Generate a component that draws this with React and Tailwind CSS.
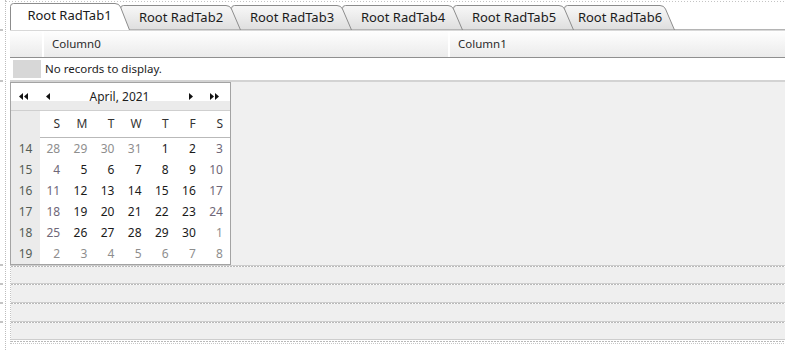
import clsx from 'clsx';

const TABS = [
  { label: 'Root RadTab1', w: 120, box: 'w-[120px] h-[27px] -mb-px z-[6]', selected: true },
  { label: 'Root RadTab2', w: 121, box: 'w-[121px] h-[25px] -mb-px -ml-[10px] z-[5]' },
  { label: 'Root RadTab3', w: 121, box: 'w-[121px] h-[25px] -mb-px -ml-[10px] z-[4]' },
  { label: 'Root RadTab4', w: 121, box: 'w-[121px] h-[25px] -mb-px -ml-[10px] z-[3]' },
  { label: 'Root RadTab5', w: 121, box: 'w-[121px] h-[25px] -mb-px -ml-[10px] z-[2]' },
  { label: 'Root RadTab6', w: 111, box: 'w-[111px] h-[25px] -mb-px -ml-[10px] z-[1]' },
];

// week number, then 7 days; o = other month, w = weekend
const WEEKS = [
  [14, ['28o', '29o', '30o', '31o', '1', '2', '3w']],
  [15, ['4w', '5', '6', '7', '8', '9', '10w']],
  [16, ['11w', '12', '13', '14', '15', '16', '17w']],
  [17, ['18w', '19', '20', '21', '22', '23', '24w']],
  [18, ['25w', '26', '27', '28', '29', '30', '1o']],
  [19, ['2o', '3o', '4o', '5o', '6o', '7o', '8o']],
];

function Tab({ tab, i }) {
  const h = tab.selected ? 27 : 25;
  const w = tab.w;
  const outline = `M0.5 ${h} V3.5 Q0.5 0.5 3.5 0.5 H${w - 15} Q${w - 11} 0.5 ${w - 9.5} 4 L${w - 0.5} ${h}`;
  return (
    <div className={clsx('relative flex shrink-0 items-center justify-center', tab.box)}>
      <svg className="absolute inset-0" width={w} height={h}>
        <defs>
          <linearGradient id={`tabg${i}`} x1="0" y1="0" x2="0" y2="1">
            <stop offset="0" stopColor="#f8f8f8" />
            <stop offset="1" stopColor="#dedede" />
          </linearGradient>
        </defs>
        <path d={`${outline} Z`} fill={tab.selected ? '#ffffff' : `url(#tabg${i})`} />
        <path d={tab.selected ? outline : `${outline} Z`} fill="none" stroke="#8c8c8c" />
      </svg>
      <span className={clsx('relative text-[13px] text-[#1b1b1b]', tab.selected ? 'pb-[1px] pr-[1px]' : 'pt-[1px] pl-[1px]')}>
        {tab.label}
      </span>
    </div>
  );
}

function Tri({ dir, double }) {
  const one = dir === 'l' ? '4,0 4,7 0,3.5' : '0,0 0,7 4,3.5';
  const two = dir === 'l' ? '9,0 9,7 5,3.5' : '5,0 5,7 9,3.5';
  return (
    <svg width={double ? 9 : 4} height="7" className="shrink-0">
      <polygon points={one} fill="#111" />
      {double && <polygon points={two} fill="#111" />}
    </svg>
  );
}

function Calendar() {
  return (
    <div className="flex w-[221px] shrink-0 flex-col border border-[#a3a3a3] bg-white">
      <div className="flex h-[27px] items-center bg-[linear-gradient(to_bottom,#ffffff_0_18px,#ebebeb_18px)] pl-[8px] pr-[11px]">
        <Tri dir="l" double />
        <span className="ml-[18px] flex"><Tri dir="l" /></span>
        <span className="flex-1 text-center text-[12px] text-[#1e1e1e]">April, 2021</span>
        <Tri dir="r" />
        <span className="ml-[17px] flex"><Tri dir="r" double /></span>
      </div>
      <div className="h-px bg-[#cfcfcf]" />
      <div className="flex">
        <div className="flex w-[29px] flex-col bg-[#ebebeb]">
          <div className="h-[27px]" />
          {WEEKS.map(([n]) => (
            <div key={n} className="flex h-[21px] items-center justify-center text-[12px] text-[#555d55]">
              {n}
            </div>
          ))}
        </div>
        <div className="flex flex-1 flex-col">
          <div className="grid h-[27px] grid-cols-7 border-b border-[#b9b9b9]">
            {['S', 'M', 'T', 'W', 'T', 'F', 'S'].map((d, k) => (
              <div key={k} className="flex items-center justify-end pr-[7px] text-[12px] text-[#333]">
                {d}
              </div>
            ))}
          </div>
          {WEEKS.map(([n, days]) => (
            <div key={n} className="grid h-[21px] grid-cols-7">
              {days.map((d, k) => {
                const other = d.endsWith('o');
                const weekend = d.endsWith('w');
                return (
                  <div
                    key={k}
                    className={clsx(
                      'flex items-center justify-end pr-[7px] text-[12px]',
                      other ? 'text-[#8e8e8e]' : weekend ? 'text-[#6f6778]' : 'text-[#1a1a1a]'
                    )}
                  >
                    {d.replace(/[ow]$/, '')}
                  </div>
                );
              })}
            </div>
          ))}
        </div>
      </div>
    </div>
  );
}

function Panel({ h }) {
  return (
    <div className="flex flex-col">
      <div className="h-px bg-[#cdcdcd]" />
      <div className="h-px bg-[repeating-linear-gradient(90deg,#b9b9b9_0_2px,transparent_2px_3px)]" />
      <div className={clsx('bg-[#efefef]', h)} />
    </div>
  );
}

export default function App() {
  return (
    <div className="flex h-[350px] w-[785px] overflow-hidden bg-white font-['Noto_Sans','Open_Sans',sans-serif]">
      {/* bits of the parent designer surface */}
      <div className="flex w-[5px] flex-col">
        <div className="mt-[29px] h-[2px] w-[3px] bg-[#c4c4c4]" />
        <div className="mt-[49px] h-[2px] w-[3px] bg-[#c4c4c4]" />
        <div className="mt-[182px] h-[2px] w-[3px] bg-[#c4c4c4]" />
        <div className="mt-[17px] h-[2px] w-[3px] bg-[#c4c4c4]" />
        <div className="mt-[17px] h-[2px] w-[3px] bg-[#c4c4c4]" />
        <div className="mt-[17px] h-[2px] w-[3px] bg-[#c4c4c4]" />
      </div>

      <div className="flex flex-1 flex-col border-l border-dotted border-[#bdbdbd]">
        <div className="mt-px h-px bg-[repeating-linear-gradient(90deg,#c4c4c4_0_1px,transparent_1px_3px)]" />

        <div className="flex flex-1 flex-col pl-[4px] pt-px">
          {/* Tabs */}
          <div className="flex h-[27px] items-end border-b border-[#b4b4b4]">
            {TABS.map((t, i) => (
              <Tab key={t.label} tab={t} i={i} />
            ))}
          </div>

          {/* Grid */}
          <div className="flex h-[28px] gap-[2px] border-t border-[#d8d8d8] border-b border-b-[#8f8f8f] bg-white">
            <div className="w-[32px] bg-[linear-gradient(to_bottom,#fefefe,#ebebeb)]" />
            <div className="flex w-[404px] items-center bg-[linear-gradient(to_bottom,#fefefe,#ebebeb)] pl-[8px] text-[11.5px] text-[#2b2b2b]">
              Column0
            </div>
            <div className="flex flex-1 items-center bg-[linear-gradient(to_bottom,#fefefe,#ebebeb)] pl-[8px] text-[11.5px] text-[#2b2b2b]">
              Column1
            </div>
          </div>
          <div className="flex h-[24px] items-center border-b-2 border-[#d3d3d3]">
            <div className="ml-[3px] h-[18px] w-[28px] bg-[#d7d7d7]" />
            <span className="ml-[4px] text-[11.5px] text-[#222]">No records to display.</span>
          </div>

          {/* Calendar area */}
          <div className="flex bg-[#f0f0f0]">
            <Calendar />
          </div>

          {/* Empty docked panels */}
          <div className="flex flex-col border-l border-dotted border-[#c4c4c4]">
            <Panel h="h-[16px]" />
            <Panel h="h-[17px]" />
            <Panel h="h-[17px]" />
            <Panel h="h-[16px]" />
            <div className="h-px bg-[#cdcdcd]" />
            <div className="mt-px h-px bg-[repeating-linear-gradient(90deg,#b9b9b9_0_2px,transparent_2px_3px)]" />
            <div className="mt-px h-px bg-[repeating-linear-gradient(90deg,#c8c8c8_0_1px,transparent_1px_2px)]" />
          </div>
        </div>
      </div>
    </div>
  );
}
